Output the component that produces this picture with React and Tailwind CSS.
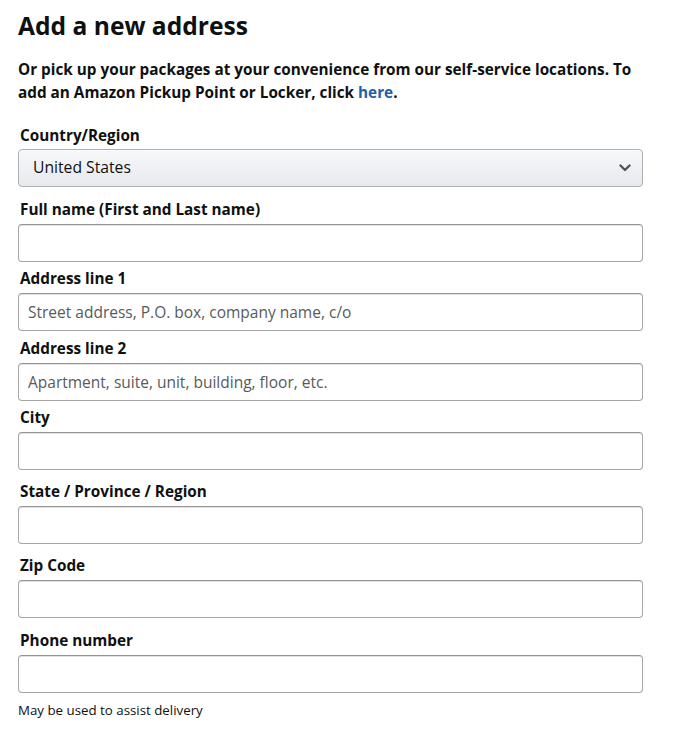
export default function App() {
  const font = { fontFamily: '"Open Sans", "Noto Sans", Arial, sans-serif' };
  const Label = ({ children, className = "" }) => (
    <div className={`pl-[2px] text-[15.3px] leading-[20px] font-bold text-[#0f1111] ${className}`}>{children}</div>
  );
  const Input = ({ placeholder }) => (
    <input
      placeholder={placeholder}
      className="mt-[5px] block h-[38px] w-full rounded-[4px] border border-[#a6a6a6] border-t-[#949494] bg-white px-[9px] text-[15.5px] text-[#0f1111] placeholder:text-[#575b5b] shadow-[inset_0_1px_0_rgba(15,17,17,0.12)] outline-none"
    />
  );
  return (
    <div className="min-h-[730px] w-[679px] bg-white text-[#0f1111]" style={font}>
      <div className="ml-[18px] w-[625px] pt-[9px]">
        <h1 className="text-[24.6px] leading-[34px] font-bold text-[#0f1111]">Add a new address</h1>
        <p className="mt-[15px] text-[15.3px] leading-[23px] font-bold">
          Or pick up your packages at your convenience from our self-service locations. To add an Amazon Pickup Point or Locker, click <a className="text-[#1f62a8]">here</a>.
        </p>
        <Label className="mt-[21px]">Country/Region</Label>
        <div className="mt-[4px] flex h-[38px] w-full items-center justify-between rounded-[4px] border border-[#acafb3] bg-gradient-to-b from-[#f7f8fa] to-[#e7e9ec] pl-[14px] pr-[11px] shadow-[0_1px_0_rgba(255,255,255,0.6)_inset]">
          <span className="text-[15.7px] text-[#0f1111]">United States</span>
          <svg width="12" height="8" viewBox="0 0 12 8" fill="none">
            <path d="M1.5 1.5 L6 6 L10.5 1.5" stroke="#555" strokeWidth="2.4" strokeLinecap="round" strokeLinejoin="round" />
          </svg>
        </div>
        <Label className="mt-[12px]">Full name (First and Last name)</Label>
        <Input />
        <Label className="mt-[6px]">Address line 1</Label>
        <Input placeholder="Street address, P.O. box, company name, c/o" />
        <Label className="mt-[7px]">Address line 2</Label>
        <Input placeholder="Apartment, suite, unit, building, floor, etc." />
        <Label className="mt-[6px]">City</Label>
        <Input />
        <Label className="mt-[11px]">State / Province / Region</Label>
        <Input />
        <Label className="mt-[11px]">Zip Code</Label>
        <Input />
        <Label className="mt-[12px]">Phone number</Label>
        <Input />
        <div className="mt-[8px] text-[13.3px] leading-[18px] text-[#0f1111]">May be used to assist delivery</div>
      </div>
    </div>
  );
}
